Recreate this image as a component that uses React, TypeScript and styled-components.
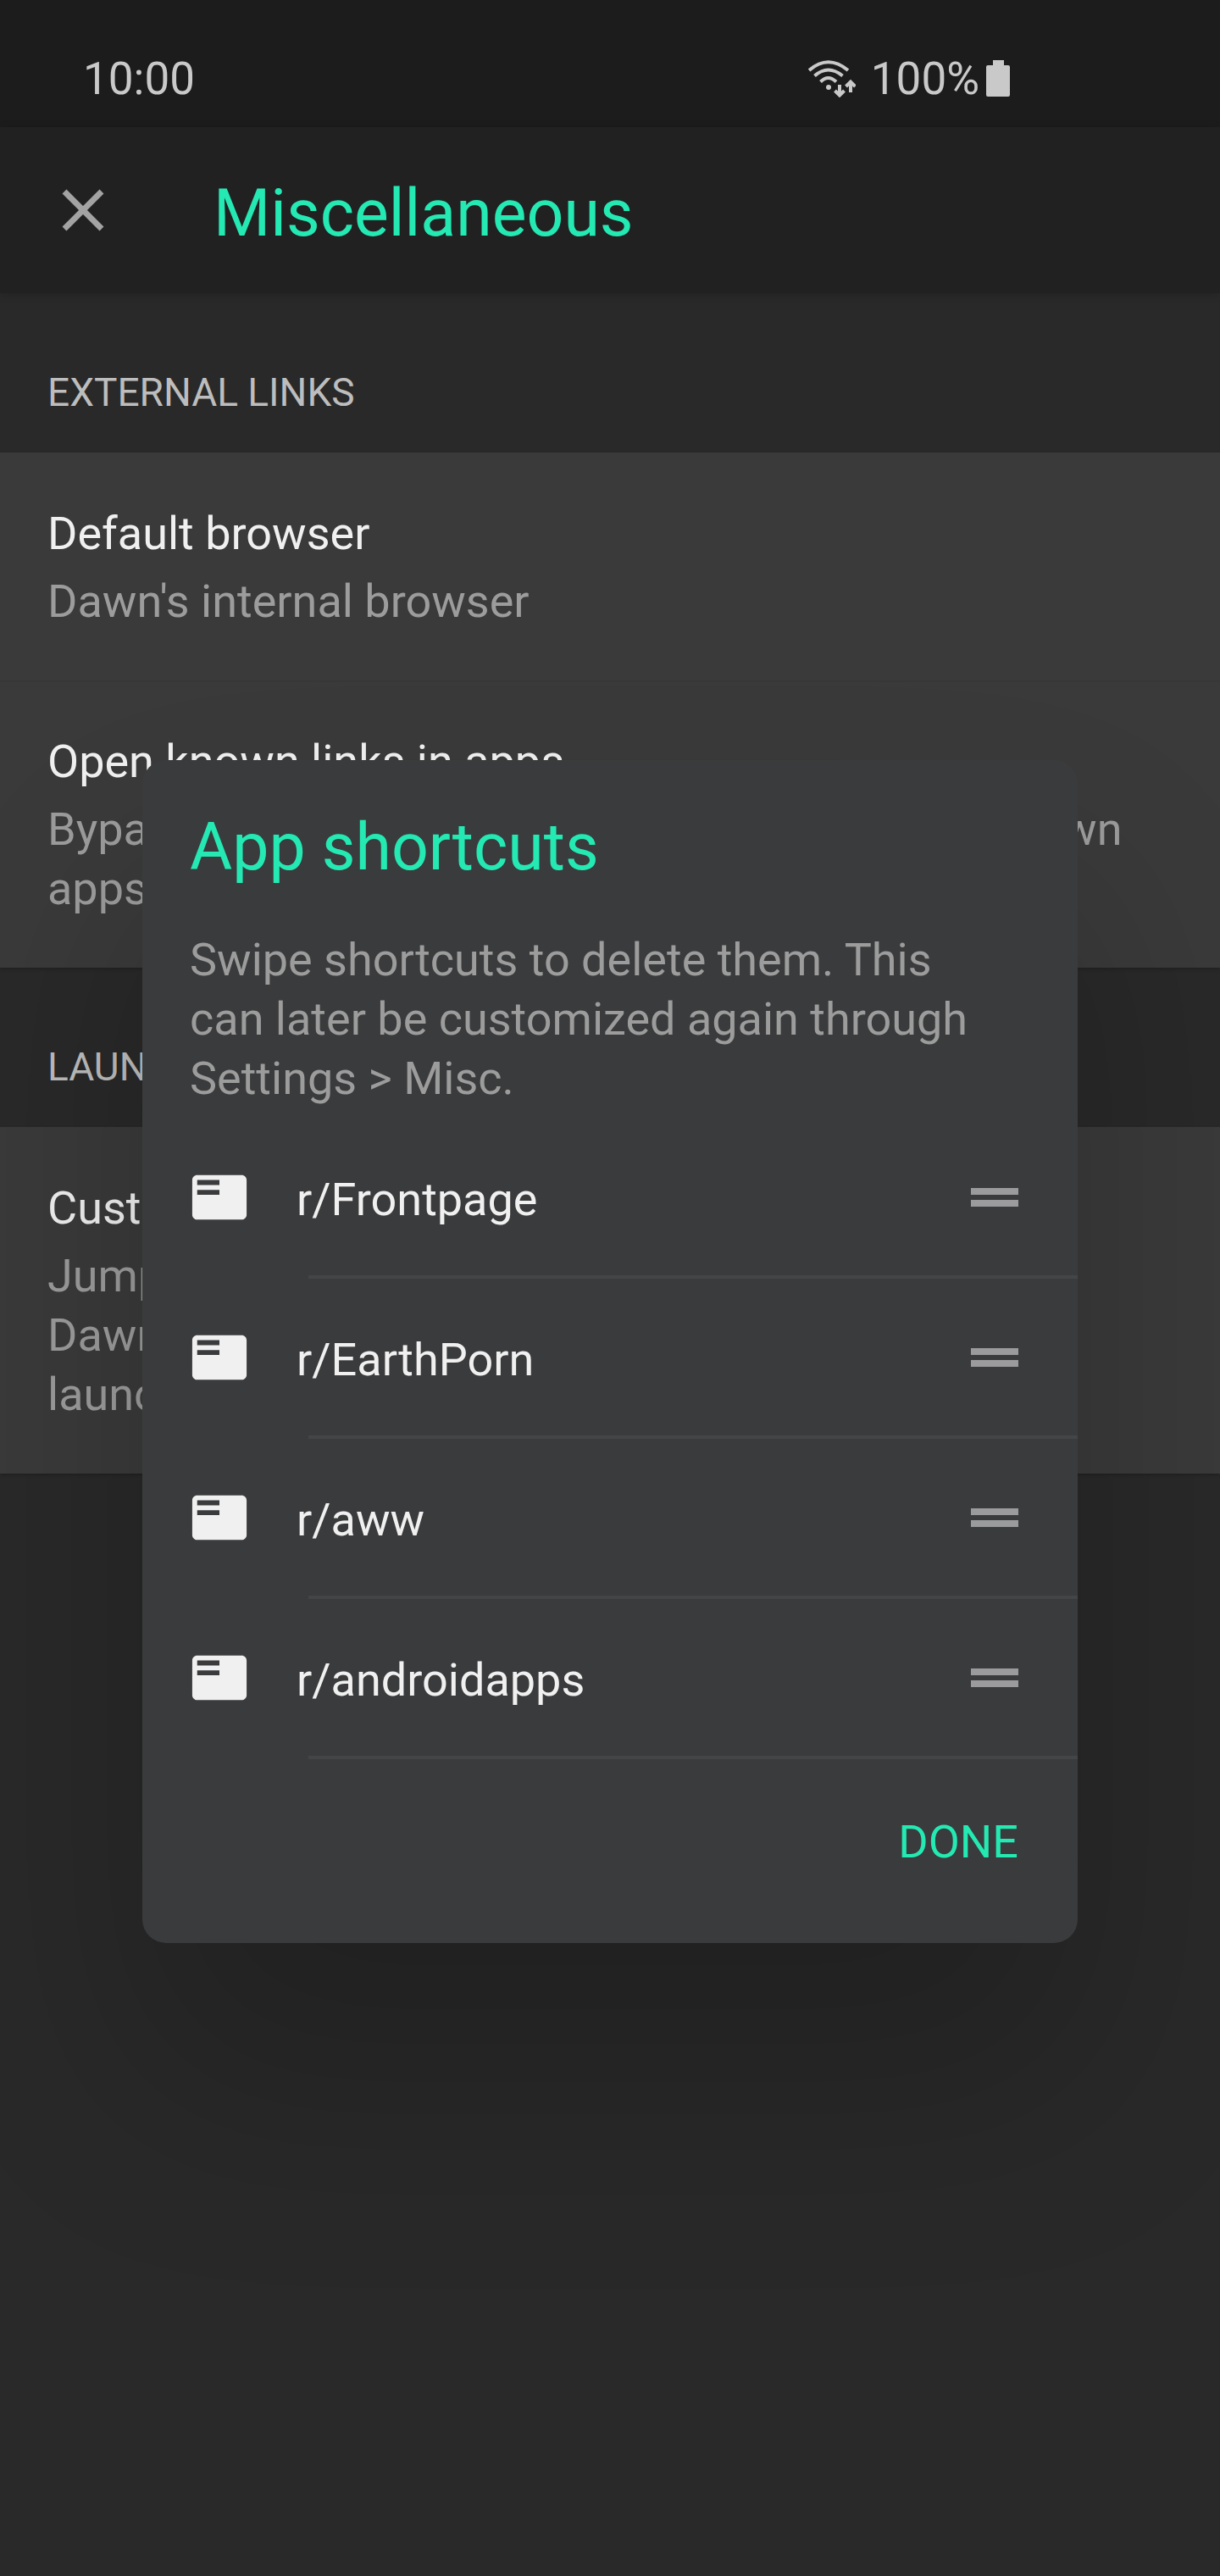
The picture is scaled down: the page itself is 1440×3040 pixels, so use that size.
import React from "react";
import styled, { createGlobalStyle } from "styled-components";

const color = {
  page: "#292929",
  status: "#1c1c1c",
  bar: "#212121",
  card: "#3a3a3a",
  dialog: "#3a3b3c",
  rule: "#444547",
  accent: "#24e9b3",
  statusText: "#c9c9c9",
  heading: "#bdbdbd",
  muted: "#9c9c9c",
  strong: "#f0f0f0",
};

const GlobalStyle = createGlobalStyle`
  *, *::before, *::after { box-sizing: border-box; }
  body {
    margin: 0;
    background: ${color.page};
    font-family: Roboto, "Liberation Sans", sans-serif;
    font-size: 54px;
    line-height: 70px;
  }
  button { font: inherit; border: 0; background: none; padding: 0; margin: 0; cursor: pointer; }
  h1, h2, p, ul { margin: 0; padding: 0; font-weight: 400; }
  svg { display: block; flex: none; }
`;

const Screen = styled.div`
  min-height: 100vh;
  overflow: hidden;
`;

const StatusBar = styled.header`
  display: flex;
  align-items: center;
  justify-content: space-between;
  height: 150px;
  padding: 36px 248px 0 98px;
  font-size: 53px;
  background: ${color.status};
  color: ${color.statusText};
`;

const StatusGroup = styled.div`
  display: flex;
  align-items: center;
`;

const Percent = styled.span`
  margin: 0 8px 0 18px;
`;

const AppBar = styled.nav`
  display: flex;
  align-items: center;
  gap: 126px;
  height: 196px;
  padding: 0 70px;
  background: ${color.bar};
  box-shadow: 0 2px 10px rgba(0, 0, 0, 0.16);
`;

const IconButton = styled.button`
  display: flex;
  align-items: center;
  justify-content: center;
  color: #a3a3a3;
`;

const Title = styled.h1`
  padding-top: 8px;
  font-size: 77px;
  line-height: 90px;
  color: ${color.accent};
`;

const SectionHeading = styled.h2`
  padding: 82px 56px 36px;
  font-size: 46px;
  line-height: 70px;
  text-transform: uppercase;
  color: ${color.heading};
`;

const Card = styled.section`
  display: flex;
  flex-direction: column;
  background: ${color.card};
  box-shadow: 0 2px 4px rgba(0, 0, 0, 0.2);
`;

const Setting = styled.button`
  display: flex;
  flex-direction: column;
  gap: 10px;
  padding: 61px 56px 58px;
  text-align: left;
  color: ${color.strong};

  & + & { background: linear-gradient(#373737, #373737) 0 0 / 100% 2px no-repeat; }
`;

const Summary = styled.span`
  color: ${color.muted};
`;

const Overlay = styled.div`
  position: fixed;
  inset: 150px 0 0;
  display: flex;
  align-items: center;
  justify-content: center;
  padding: 0 168px;
`;

const Dialog = styled.div`
  flex: 1;
  padding-top: 58px;
  border-radius: 28px;
  background: ${color.dialog};
  box-shadow: 0 160px 280px rgba(0, 0, 0, 0.2);
`;

const DialogTitle = styled.h2`
  padding: 0 56px;
  font-size: 77px;
  line-height: 90px;
  color: ${color.accent};
`;

const DialogText = styled.p`
  padding: 53px 112px 12px 56px;
  color: ${color.muted};
`;

const ShortcutList = styled.ul`
  list-style: none;
`;

const Shortcut = styled.li`
  display: grid;
  grid-template-columns: 70px 1fr auto;
  column-gap: 56px;
  align-items: center;
  height: 189px;
  padding: 0 70px 4px 56px;
  color: ${color.strong};
  background: linear-gradient(${color.rule}, ${color.rule}) 196px 100% / 100% 4px no-repeat;
`;

const ShortcutName = styled.span`
  padding-top: 6px;
`;

const Handle = styled.button`
  color: #9b9b9d;
  cursor: grab;
`;

const Actions = styled.div`
  display: flex;
  justify-content: flex-end;
  padding: 63px 70px 84px;
`;

const DoneButton = styled.button`
  text-transform: uppercase;
  color: ${color.accent};
`;

const WifiIcon = () => (
  <svg width="56" height="44" viewBox="0 0 56 44" fill="none" stroke="currentColor" aria-hidden="true">
    <g strokeWidth="4">
      <path d="M1 12Q23.500 -7.500 47 12" />
      <path d="M7.500 18.500Q23.500 4.500 40.500 18.500" />
      <path d="M14.500 25.500Q23.500 16.500 33 25.500" />
    </g>
    <circle cx="24" cy="32" r="3" fill="currentColor" stroke="none" />
    <path d="M37 29v12M31.500 36l5.500 5.500 5.500-5.500M50 38V26M44.500 31l5.500-5.500 5.500 5.500" strokeWidth="4" />
  </svg>
);

const BatteryIcon = () => (
  <svg width="28" height="44" viewBox="0 0 28 44" fill="currentColor" aria-hidden="true">
    <path d="M8 0h13v6h5a2 2 0 0 1 2 2v33a2 2 0 0 1-2 2H2a2 2 0 0 1-2-2V8a2 2 0 0 1 2-2h6z" />
  </svg>
);

const CloseIcon = () => (
  <svg width="56" height="56" viewBox="0 0 56 56" stroke="currentColor" strokeWidth="7" aria-hidden="true">
    <path d="M6 6l44 44M50 6L6 50" />
  </svg>
);

const ListIcon = () => (
  <svg width="70" height="70" viewBox="0 0 24 24" fill="currentColor" aria-hidden="true">
    <path d="M21 3H3c-1.100 0-2 .9-2 2v14c0 1.100.9 2 2 2h18c1.100 0 2-.9 2-2V5c0-1.100-.9-2-2-2zm-9 8H3V9h9v2zm0-4H3V5h9v2z" />
  </svg>
);

const HandleIcon = () => (
  <svg width="56" height="22" viewBox="0 0 56 22" fill="currentColor" aria-hidden="true">
    <path d="M0 0h56v8H0zM0 14h56v8H0z" />
  </svg>
);

const shortcuts = ["r/Frontpage", "r/EarthPorn", "r/aww", "r/androidapps"];

const SettingRow = ({ title, summary }: { title: string; summary: string }) => (
  <Setting type="button">
    <span>{title}</span>
    <Summary>{summary}</Summary>
  </Setting>
);

export default function App() {
  return (
    <Screen>
      <GlobalStyle />
      <StatusBar>
        <span>10:00</span>
        <StatusGroup>
          <WifiIcon />
          <Percent>100%</Percent>
          <BatteryIcon />
        </StatusGroup>
      </StatusBar>
      <AppBar>
        <IconButton type="button" aria-label="Close">
          <CloseIcon />
        </IconButton>
        <Title>Miscellaneous</Title>
      </AppBar>
      <main>
        <SectionHeading>External links</SectionHeading>
        <Card>
          <SettingRow title="Default browser" summary="Dawn's internal browser" />
          <SettingRow
            title="Open known links in apps"
            summary="Bypass the browser for all known links with their own apps"
          />
        </Card>
        <SectionHeading>Launcher</SectionHeading>
        <Card>
          <SettingRow
            title="Customize app shortcuts"
            summary="Jump to your favorite subreddits by long pressing Dawn's icon. Requires Android 7.1 or a supported launcher"
          />
        </Card>
      </main>
      <Overlay>
        <Dialog role="dialog" aria-modal="true" aria-labelledby="shortcuts-title">
          <DialogTitle id="shortcuts-title">App shortcuts</DialogTitle>
          <DialogText>
            Swipe shortcuts to delete them. This can later be customized again through Settings &gt; Misc.
          </DialogText>
          <ShortcutList>
            {shortcuts.map((name) => (
              <Shortcut key={name}>
                <ListIcon />
                <ShortcutName>{name}</ShortcutName>
                <Handle type="button" aria-label={`Reorder ${name}`}>
                  <HandleIcon />
                </Handle>
              </Shortcut>
            ))}
          </ShortcutList>
          <Actions>
            <DoneButton type="button">Done</DoneButton>
          </Actions>
        </Dialog>
      </Overlay>
    </Screen>
  );
}
